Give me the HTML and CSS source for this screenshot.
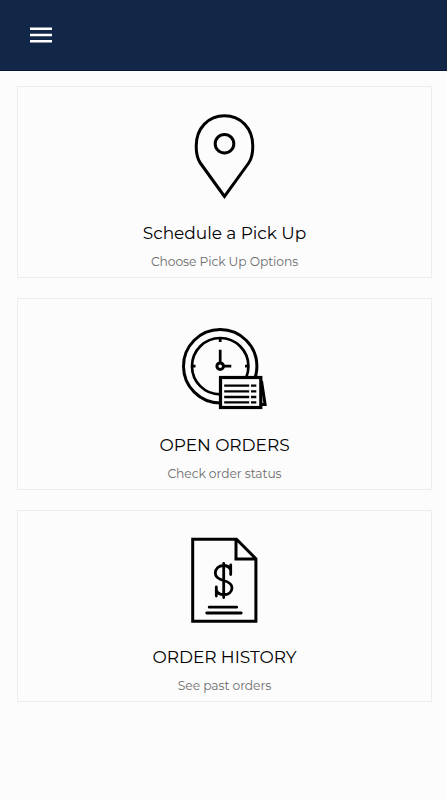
FILE: index.html
```html
<!DOCTYPE html>
<html lang="en">
<head>
    <meta charset="UTF-8">
    <meta name="viewport" content="width=device-width, initial-scale=1.0">
    <title>Orders</title>
    <link rel="stylesheet" href="styles.css">
</head>
<body>
    <header class="navbar">
        <button class="menu-button" type="button" aria-label="Menu">
            <svg width="22" height="16" viewBox="0 0 22 16">
                <path d="M0 1.7h22M0 8h22M0 14.3h22" stroke="#fff" stroke-width="2.6"/>
            </svg>
        </button>
    </header>

    <main class="cards">
        <a class="card">
            <!-- Map pin -->
            <svg class="icon" viewBox="0.5 0 90 90">
                <path d="M45 84.5L20.8 51C17.8 46.8 16.7 40 16.7 34C16.7 16 29 3.7 45 3.7S73.3 16 73.3 34C73.3 40 72.2 46.8 69.2 51Z"/>
                <circle cx="45" cy="31.7" r="9.3"/>
            </svg>
            <h2>Schedule a Pick Up</h2>
            <p>Choose Pick Up Options</p>
        </a>

        <a class="card">
            <!-- Clock with order slip -->
            <svg class="icon" viewBox="0.5 0 90 90">
                <circle cx="40.7" cy="42.2" r="36.7"/>
                <circle class="thin" cx="40.7" cy="42.2" r="28.2"/>
                <path class="thin" d="M40.7 13v5M12 42.2h4M65.5 42.2h4M40.7 25.7v13M44 42.2h7.8"/>
                <circle cx="40.7" cy="42.2" r="3.3"/>
                <path d="M82 57L85.6 80.5H82"/>
                <rect class="slip" x="41" y="53.5" width="40.3" height="30"/>
                <path class="rows" d="M44.7 61.7h25M71.5 61.7h5.3M44.7 67.3h25M71.5 67.3h5.3M44.7 73h25M71.5 73h5.3M44.7 78.4h25M71.5 78.4h5.3"/>
            </svg>
            <h2>OPEN ORDERS</h2>
            <p>Check order status</p>
        </a>

        <a class="card">
            <!-- Invoice -->
            <svg class="icon" viewBox="0.5 0 90 90">
                <path d="M13.2 3.3H57L76.4 22.8V85.3H13.2ZM56.5 3.3V23H76.4"/>
                <path class="round" d="M44.2 27.3V61.5M51.2 29v9.5M36.8 51v9M51.2 34C50 31 47.5 29.5 44 29.5C39 29.5 35.8 32.8 35.8 37C35.8 41.5 39.5 43.3 44 44.5C49 45.8 52.5 47.5 52.5 51.8C52.5 56 49 58.7 44 58.7C40.5 58.7 38 57 36.8 54M29.7 71.2h27.5M27.2 77h34.5"/>
            </svg>
            <h2>ORDER HISTORY</h2>
            <p>See past orders</p>
        </a>
    </main>
</body>
</html>
```
FILE: styles.css
```css
* {
    box-sizing: border-box;
}

body {
    margin: 0;
    min-height: 100vh;
    background-color: #fcfcfc;
    font-family: Montserrat, Inter, sans-serif;
}

.navbar {
    display: flex;
    align-items: center;
    height: 71px;
    padding: 0 30px;
    background-color: #122648;
    border-bottom: 1px solid #0b1539;
}

.menu-button {
    display: flex;
    padding: 0;
    border: none;
    background: none;
    cursor: pointer;
}

.cards {
    display: flex;
    flex-direction: column;
    gap: 20px;
    padding: 15px 15px 15px 17px;
}

.card {
    display: flex;
    flex-direction: column;
    align-items: center;
    height: 192px;
    padding-top: 25px;
    border: 1px solid #ececec;
    text-align: center;
}

.icon {
    width: 90px;
    height: 90px;
    fill: none;
    stroke: #000;
    stroke-width: 3;
}

.icon .thin {
    stroke-width: 2.7;
}

.icon .rows {
    stroke-width: 2.3;
}

.icon .slip {
    fill: #fcfcfc;
    stroke-width: 3.2;
}

.icon .round {
    stroke-width: 2.8;
    stroke-linecap: round;
}

.card h2 {
    margin: 19px 0 0;
    font-size: 17px;
    font-weight: 400;
    line-height: 24px;
    letter-spacing: -0.05px;
    color: #000;
}

.card p {
    margin: 7px 0 0;
    font-size: 12.3px;
    line-height: 20px;
    letter-spacing: -0.08px;
    color: #6c6c6c;
}
```
